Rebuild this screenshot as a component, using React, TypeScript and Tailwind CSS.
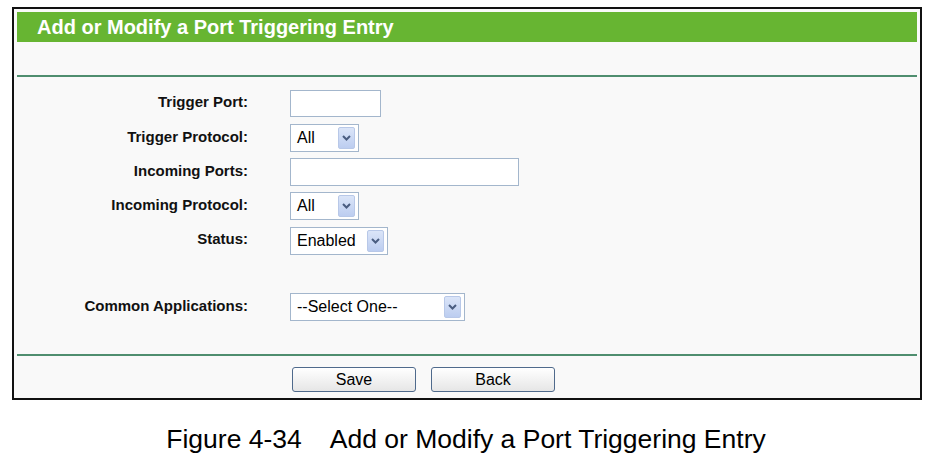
import React from 'react';

const font = { fontFamily: '"Liberation Sans", Arial, sans-serif' };

function Chevron() {
  return (
    <span className="flex h-[22px] w-[17px] items-center justify-center rounded-[2px] border border-[#b8c8e8] bg-gradient-to-b from-[#dbe5f8] to-[#bccdf0]">
      <svg width="9" height="6" viewBox="0 0 9 6">
        <polyline points="1,1 4.5,4.5 8,1" fill="none" stroke="#4a5d80" strokeWidth="2" />
      </svg>
    </span>
  );
}

function FakeSelect({ value, width }: { value: string; width: string }) {
  return (
    <div
      className={`flex h-[28px] items-center justify-between border border-[#a3b6cc] bg-white pl-[6px] pr-[3px] text-[16px] text-black ${width}`}
    >
      <span>{value}</span>
      <Chevron />
    </div>
  );
}

function Row({ label, children }: { label: string; children: React.ReactNode }) {
  return (
    <div className="flex h-[34.25px] items-center">
      <div className="w-[231px] pb-[2px] text-right text-[15px] font-bold text-[#111]">{label}</div>
      <div className="ml-[42px] flex items-center">{children}</div>
    </div>
  );
}

export default function App() {
  return (
    <div className="h-[467px] w-[940px] bg-white pt-[7px]" style={font}>
      <div className="ml-[12px] w-[910px] border-2 border-[#111] bg-[#f9f9f9] p-[3px]">
        <div className="flex h-[30px] items-center bg-[#67b532] pb-[1px] pl-[20px] text-[20px] font-bold text-white">
          Add or Modify a Port Triggering Entry
        </div>
        <div className="h-[33px]" />
        <div className="h-[2px] bg-[#4f8e6f]" />
        <div className="pt-[9.5px]">
          <Row label="Trigger Port:">
            <div className="h-[27px] w-[91px] border border-[#a3b6cc] bg-white" />
          </Row>
          <Row label="Trigger Protocol:">
            <FakeSelect value="All" width="w-[69px]" />
          </Row>
          <Row label="Incoming Ports:">
            <div className="h-[28px] w-[229px] border border-[#a3b6cc] bg-white" />
          </Row>
          <Row label="Incoming Protocol:">
            <FakeSelect value="All" width="w-[69px]" />
          </Row>
          <Row label="Status:">
            <FakeSelect value="Enabled" width="w-[98px]" />
          </Row>
          <div className="h-[32.5px]" />
          <Row label="Common Applications:">
            <FakeSelect value="--Select One--" width="w-[175px]" />
          </Row>
        </div>
        <div className="h-[29px]" />
        <div className="h-[2px] bg-[#4f8e6f]" />
        <div className="flex gap-[15px] pb-[3px] pl-[275px] pt-[11px]">
          <button className="h-[25px] w-[124px] rounded-[3px] border border-[#4f6a8c] bg-gradient-to-b from-white to-[#e6e6e6] text-[16px] text-black">
            Save
          </button>
          <button className="h-[25px] w-[124px] rounded-[3px] border border-[#4f6a8c] bg-gradient-to-b from-white to-[#e6e6e6] text-[16px] text-black">
            Back
          </button>
        </div>
      </div>
      <div className="mt-[20px] pr-[8px] text-center text-[26.5px] text-black whitespace-pre">
        {'Figure 4-34    Add or Modify a Port Triggering Entry'}
      </div>
    </div>
  );
}
